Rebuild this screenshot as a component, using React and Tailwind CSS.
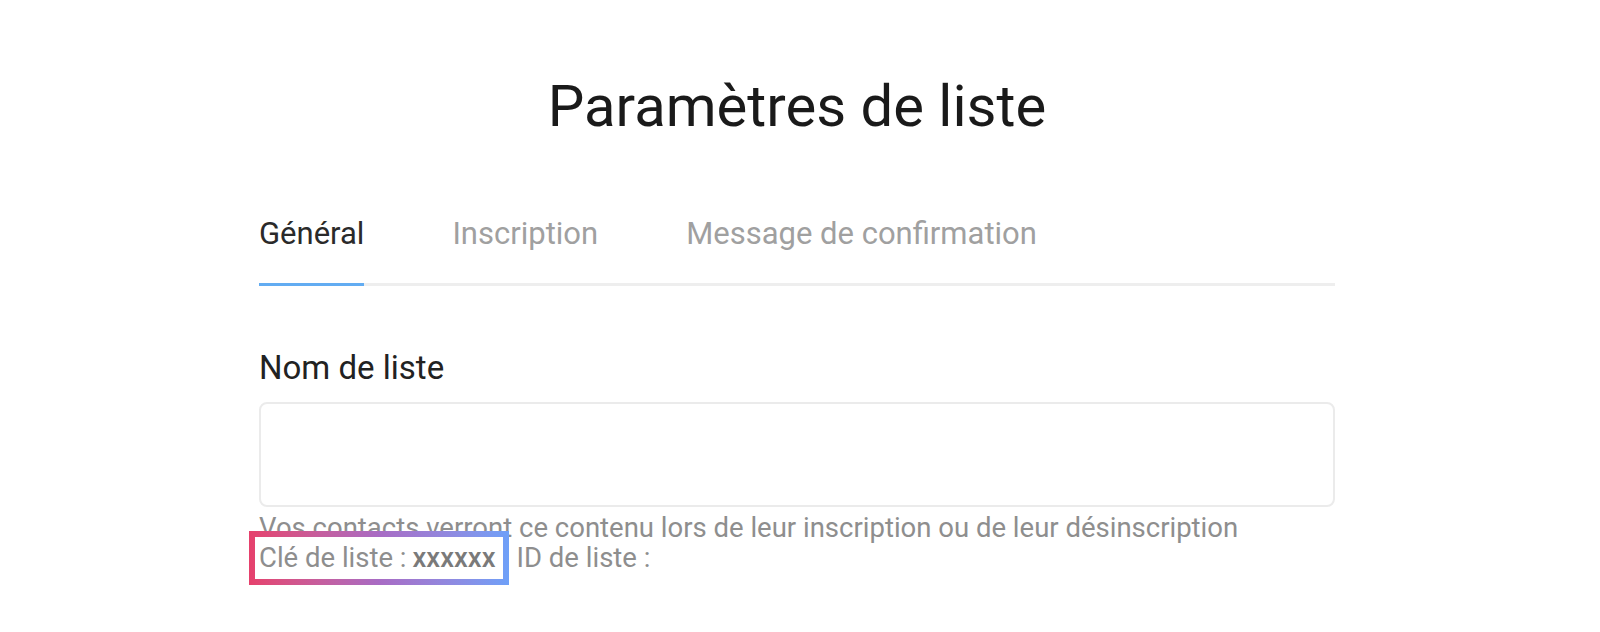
export default function App() {
  return (
    <div className="min-h-[632px] w-full bg-white font-['Roboto',sans-serif]">
      <div className="ml-[259px] w-[1076px] pt-[77px]">
        <h1 className="text-center text-[58px] leading-none font-normal text-[#1a1a1a]">
          Paramètres de liste
        </h1>

        <div className="mt-[83px] flex gap-[88px] border-b-[3px] border-[#eeeeee] text-[31px] leading-none">
          <div className="-mb-[3px] border-b-[3px] border-[#62acf2] pb-[34px] text-[#2a2a2a]">
            Général
          </div>
          <div className="-mb-[3px] border-b-[3px] border-transparent pb-[34px] text-[#a0a0a0]">
            Inscription
          </div>
          <div className="-mb-[3px] border-b-[3px] border-transparent pb-[34px] text-[#a0a0a0]">
            Message de confirmation
          </div>
        </div>

        <div className="mt-[65px] text-[33px] leading-none text-[#222222]">
          Nom de liste
        </div>

        <div className="mt-[18px] h-[105px] w-full rounded-[8px] border-2 border-[#ebebeb] bg-white"></div>

        <div className="mt-[6px] text-[27.5px] leading-[30px] text-[#8e8e8e]">
          <div>
            Vos contacts verront ce contenu lors de leur inscription ou de leur désinscription
          </div>
          <div>
            <span className="relative inline-block">
              <span className="absolute -top-[12px] -bottom-[12px] -left-[10px] -right-[13px] bg-linear-to-r from-[#e6406c] via-[#a86bc4] to-[#6ea0f8] p-[6px]">
                <span className="block h-full w-full bg-white"></span>
              </span>
              <span className="relative">
                Clé de liste :<span className="ml-[6px] font-medium text-[#7a7a7a]">xxxxxx</span>
              </span>
            </span>
            <span className="ml-[21px]">ID de liste :</span>
          </div>
        </div>
      </div>
    </div>
  );
}
